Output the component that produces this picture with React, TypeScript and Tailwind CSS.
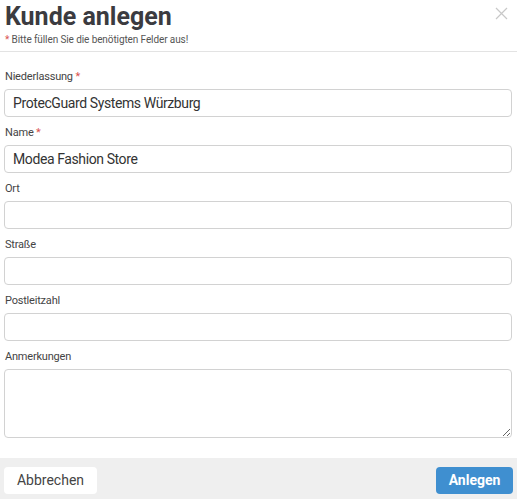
import React from 'react';

const FIELDS = [
  { key: 'niederlassung', label: 'Niederlassung', required: true, value: 'ProtecGuard Systems Würzburg' },
  { key: 'name', label: 'Name', required: true, value: 'Modea Fashion Store' },
  { key: 'ort', label: 'Ort', required: false, value: '' },
  { key: 'strasse', label: 'Straße', required: false, value: '' },
  { key: 'plz', label: 'Postleitzahl', required: false, value: '' },
];

export default function App() {
  return (
    <div className="w-[517px] h-[499px] overflow-hidden bg-white flex flex-col font-['Roboto',sans-serif] text-[#444]">
      {/* Kopfbereich */}
      <div className="relative h-[52px] border-b border-[#e3e3e3] px-[5px] pt-[2px]">
        <h1 className="text-[25px] leading-[30px] font-bold text-[#3b3b40]">Kunde anlegen</h1>
        <p className="text-[10px] leading-[14px] tracking-[-0.1px] text-[#555] mt-[1px]">
          <span className="text-[#d9534f]">*</span> Bitte füllen Sie die benötigten Felder aus!
        </p>
        <button className="absolute right-[9px] top-[7px] w-[13px] h-[13px]">
          <svg viewBox="0 0 13 13" className="w-[13px] h-[13px]">
            <path d="M1 1 L12 12 M12 1 L1 12" stroke="#c8c8c8" strokeWidth="1.2" fill="none" />
          </svg>
        </button>
      </div>

      {/* Formular */}
      <div className="flex-1 pl-[4px] pr-[5px] pt-[18px]">
        {FIELDS.map((f) => (
          <div key={f.key} className="mb-[9px]">
            <label className="block text-[11px] leading-[14px] tracking-[-0.2px] mb-[5px] px-[1px] text-[#444]">
              {f.label}
              {f.required && <span className="text-[#d9534f]"> *</span>}
            </label>
            <input
              defaultValue={f.value}
              className="block w-full h-[28px] border border-[#d2d2d2] rounded-[4px] px-[8px] text-[14px] tracking-[-0.4px] text-[#333] outline-none"
            />
          </div>
        ))}
        <div>
          <label className="block text-[11px] leading-[14px] tracking-[-0.2px] mb-[5px] px-[1px] text-[#444]">Anmerkungen</label>
          <textarea className="block w-full h-[69px] border border-[#d2d2d2] rounded-[4px] px-[8px] py-[4px] text-[14px] text-[#333] outline-none" />
        </div>
      </div>

      {/* Fußleiste */}
      <div className="h-[41px] bg-[#efefef] flex items-start justify-between pl-[4px] pr-[4px] pt-[9px]">
        <button className="h-[27px] w-[93px] bg-white rounded-[4px] text-[14px] text-[#444]">Abbrechen</button>
        <button className="h-[27px] w-[77px] bg-[#3f8fd0] rounded-[4px] text-[14px] font-bold text-white">Anlegen</button>
      </div>
    </div>
  );
}
